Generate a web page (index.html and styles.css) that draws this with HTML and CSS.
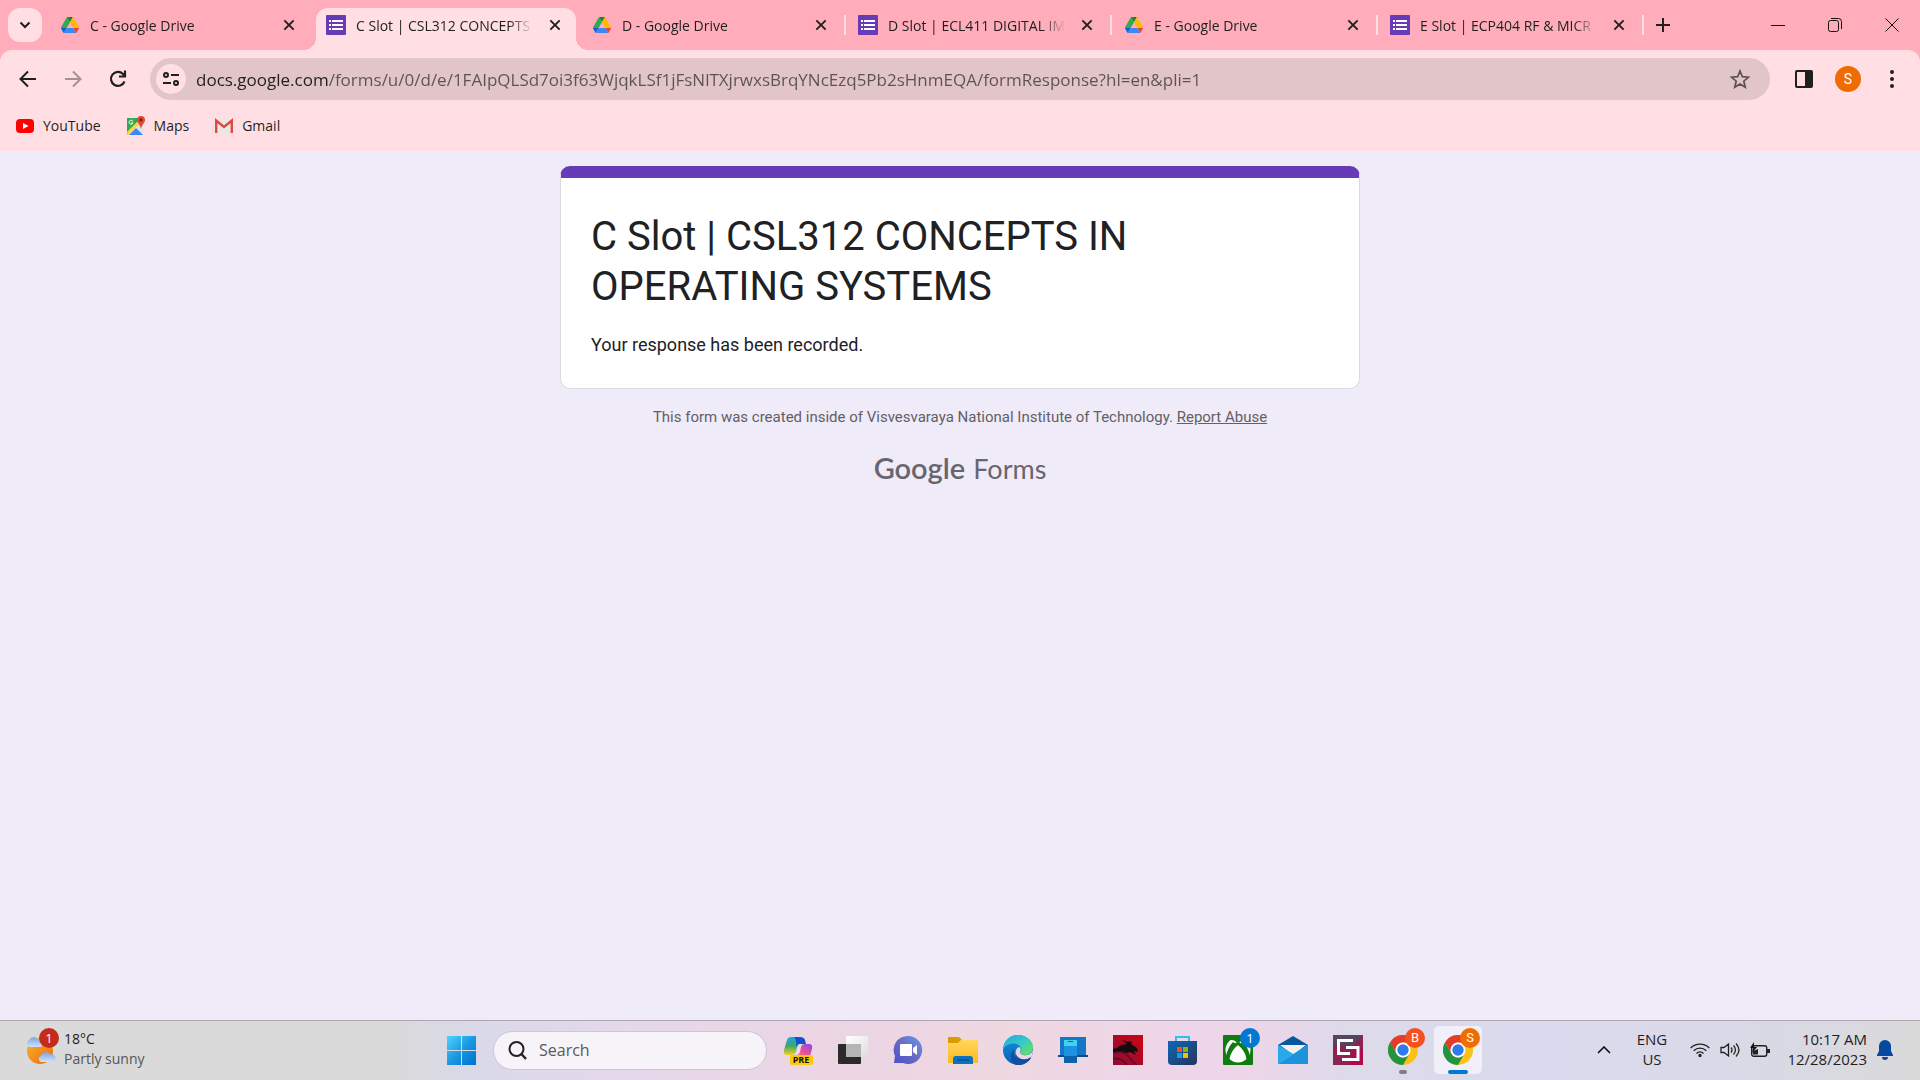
FILE: index.html
```html
<!DOCTYPE html>
<html lang="en">
<head>
<meta charset="utf-8">
<meta name="viewport" content="width=device-width, initial-scale=1">
<title>C Slot | CSL312 CONCEPTS IN OPERATING SYSTEMS</title>
<link rel="stylesheet" href="styles.css">
</head>
<body>
<svg class="defs" aria-hidden="true">
  <symbol id="drive" viewBox="0 0 87 78">
    <path fill="#0066da" d="M6.600 66.850l3.850 6.650c.8 1.400 1.950 2.500 3.300 3.300L27.500 53H0c0 1.550.4 3.100 1.200 4.500z"/>
    <path fill="#34a853" d="M43.650 25L29.900 1.200c-1.350.8-2.500 1.900-3.300 3.300L1.200 48.500A9 9 0 0 0 0 53h27.500z"/>
    <path fill="#ea4335" d="M73.550 76.800c1.350-.8 2.500-1.900 3.300-3.300l1.600-2.750L86.100 57.500c.8-1.400 1.200-2.950 1.200-4.500H59.800l5.850 11.500z"/>
    <path fill="#188038" d="M43.650 25L57.400 1.200C56.050.4 54.500 0 52.900 0H34.400c-1.600 0-3.150.45-4.500 1.200z"/>
    <path fill="#4285f4" d="M59.800 53H27.500L13.750 76.800c1.350.8 2.900 1.200 4.500 1.200h50.800c1.600 0 3.150-.45 4.500-1.200z"/>
    <path fill="#ffba00" d="M73.400 26.500L60.700 4.500c-.8-1.400-1.950-2.500-3.300-3.300L43.650 25 59.800 53h27.450c0-1.550-.4-3.100-1.200-4.500z"/>
  </symbol>
  <symbol id="forms" viewBox="0 0 20 20">
    <rect width="20" height="20" rx="1" fill="#673ab7"/>
    <path fill="#fff" d="M3 5h2v2H3zM6 5h11v2H6zM3 9h2v2H3zM6 9h11v2H6zM3 13h2v2H3zM6 13h11v2H6z"/>
  </symbol>
  <symbol id="close" viewBox="0 0 12 12">
    <path d="M2 2l8 8M10 2l-8 8" stroke="#1f1f1f" stroke-width="1.600" fill="none"/>
  </symbol>
  <symbol id="chrome" viewBox="0 0 30 30">
    <circle cx="15" cy="15" r="15" fill="#fbc116"/>
    <path fill="#e33b2e" d="M2 7.500A15 15 0 0 1 28 7.500H15A7.500 7.500 0 0 0 8.500 18.700z"/>
    <path fill="#229342" d="M2 7.500L8.500 18.800A7.500 7.500 0 0 0 21.500 18.700L15 30A15 15 0 0 1 2 7.500z"/>
    <circle cx="15" cy="15" r="7.500" fill="#fff"/>
    <circle cx="15" cy="15" r="5.700" fill="#2f79ea"/>
  </symbol>
</svg>

<header class="browser">
  <div class="tabstrip">
    <button class="tab-search" aria-label="Search tabs"><svg width="12" height="12" viewBox="0 0 12 12"><path d="M1.500 3.500L6 8l4.500-4.500" fill="none" stroke="#1f1f1f" stroke-width="2"/></svg></button>
    <nav class="tabs" aria-label="Open tabs">
      <div class="tab"><svg class="favicon drive"><use href="#drive"/></svg><span class="tab-title">C - Google Drive</span><button class="tab-close" aria-label="Close tab"><svg><use href="#close"/></svg></button></div>
      <div class="tab active"><svg class="favicon"><use href="#forms"/></svg><span class="tab-title">C Slot | CSL312 CONCEPTS</span><button class="tab-close" aria-label="Close tab"><svg><use href="#close"/></svg></button></div>
      <div class="tab divided"><svg class="favicon drive"><use href="#drive"/></svg><span class="tab-title">D - Google Drive</span><button class="tab-close" aria-label="Close tab"><svg><use href="#close"/></svg></button></div>
      <div class="tab divided"><svg class="favicon"><use href="#forms"/></svg><span class="tab-title">D Slot | ECL411 DIGITAL IM</span><button class="tab-close" aria-label="Close tab"><svg><use href="#close"/></svg></button></div>
      <div class="tab divided"><svg class="favicon drive"><use href="#drive"/></svg><span class="tab-title">E - Google Drive</span><button class="tab-close" aria-label="Close tab"><svg><use href="#close"/></svg></button></div>
      <div class="tab divided"><svg class="favicon"><use href="#forms"/></svg><span class="tab-title">E Slot | ECP404 RF &amp; MICR</span><button class="tab-close" aria-label="Close tab"><svg><use href="#close"/></svg></button></div>
      <button class="new-tab" aria-label="New tab"><svg width="14" height="14" viewBox="0 0 14 14"><path d="M7 0v14M0 7h14" stroke="#1f1f1f" stroke-width="2"/></svg></button>
    </nav>
    <div class="window-controls">
      <button aria-label="Minimize"><svg width="14" height="14" viewBox="0 0 14 14"><path d="M0 7.500h14" stroke="#111"/></svg></button>
      <button aria-label="Restore"><svg width="14" height="14" viewBox="0 0 14 14" fill="none" stroke="#111"><rect x=".5" y="2.500" width="10" height="11" rx="2"/><path d="M3 .5h7.500a3 3 0 0 1 3 3V11"/></svg></button>
      <button aria-label="Close window"><svg width="14" height="14" viewBox="0 0 14 14"><path d="M.5.5l13 13M13.500.5l-13 13" stroke="#111"/></svg></button>
    </div>
  </div>

  <div class="toolbar">
    <div class="nav-buttons">
      <button aria-label="Back"><svg width="20" height="20" viewBox="0 0 20 20"><path d="M18 10H3M10 2.500L2.500 10l7.500 7.500" fill="none" stroke="#1f1f1f" stroke-width="2"/></svg></button>
      <button aria-label="Forward" disabled><svg width="20" height="20" viewBox="0 0 20 20"><path d="M2 10h15M10 2.500l7.500 7.500-7.500 7.500" fill="none" stroke="#a48f92" stroke-width="2"/></svg></button>
      <button aria-label="Reload"><svg width="20" height="20" viewBox="0 0 20 20"><path d="M16.500 12.500A7 7 0 1 1 15 5l2 2M17 1.500V7.500h-6" fill="none" stroke="#1f1f1f" stroke-width="2.200"/></svg></button>
    </div>
    <div class="omnibox">
      <button class="site-info" aria-label="View site information"><svg width="18" height="16" viewBox="0 0 18 16" fill="none" stroke="#1f1f1f" stroke-width="2"><circle cx="4" cy="4" r="2"/><path d="M9 4h8M1 12h8"/><circle cx="14" cy="12" r="2"/></svg></button>
      <input class="url" type="text" aria-label="Address and search bar" spellcheck="false" value="docs.google.com/forms/u/0/d/e/1FAIpQLSd7oi3f63WjqkLSf1jFsNlTXjrwxsBrqYNcEzq5Pb2sHnmEQA/formResponse?hl=en&amp;pli=1">
      <button class="star" aria-label="Bookmark this tab"><svg width="20" height="20" viewBox="0 0 20 20"><path d="M10 2l2.300 5.700 6.200.5-4.700 4 1.500 6L10 15l-5.300 3.200 1.500-6-4.700-4 6.200-.5z" fill="none" stroke="#5c5254" stroke-width="1.700"/></svg></button>
    </div>
    <div class="toolbar-actions">
      <button aria-label="Side panel"><svg width="18" height="18" viewBox="0 0 18 18"><rect x="1" y="1" width="16" height="16" rx="1" fill="none" stroke="#1f1f1f" stroke-width="2"/><path d="M10 1h7v16h-7z" fill="#1f1f1f"/></svg></button>
      <button class="profile" aria-label="Profile S">S</button>
      <button aria-label="Menu"><svg width="4" height="18" viewBox="0 0 4 18" fill="#1f1f1f"><circle cx="2" cy="2" r="2"/><circle cx="2" cy="9" r="2"/><circle cx="2" cy="16" r="2"/></svg></button>
    </div>
  </div>

  <nav class="bookmarks" aria-label="Bookmarks">
    <a href="#youtube"><svg width="20" height="20" viewBox="0 0 20 20"><rect x="1" y="3" width="18" height="14" rx="4" fill="#f00"/><path d="M8 7l5.500 3L8 13z" fill="#fff"/></svg>YouTube</a>
    <a href="#maps"><svg width="20" height="20" viewBox="0 0 20 20"><path d="M1 2h16v17H1z" fill="#34a853"/><path d="M1 19L17 3v16z" fill="#dfe3e8"/><path d="M1 18L15 4" stroke="#fdd835" stroke-width="3"/><path d="M3 19l7-7 7 7z" fill="#4285f4"/><path d="M7 5.500A2 2 0 1 0 7 7H5" fill="none" stroke="#fff"/><path d="M15 0a4 4 0 0 0-4 4c0 3 3 4 4 9 1-5 4-6 4-9a4 4 0 0 0-4-4z" fill="#e0483a"/><circle cx="15" cy="4" r="1.400" fill="#811411"/></svg>Maps</a>
    <a href="#gmail"><svg width="20" height="20" viewBox="0 0 20 20"><path d="M1 3h18v14H1z" fill="#e9e7e7"/><path d="M2.200 17V4.500L10 11l7.800-6.500V17" fill="none" stroke="#dc4b3e" stroke-width="2.400"/></svg>Gmail</a>
  </nav>
</header>

<main class="page">
  <section class="card">
    <h1>C Slot | CSL312 CONCEPTS IN OPERATING SYSTEMS</h1>
    <p>Your response has been recorded.</p>
  </section>
  <p class="disclaimer">This form was created inside of Visvesvaraya National Institute of Technology. <a href="#report">Report Abuse</a></p>
  <a class="brand" href="#forms-home"><span class="brand-google">Google</span><span class="brand-forms">Forms</span></a>
</main>

<footer class="taskbar">
  <button class="weather">
    <span class="weather-icon">
      <svg width="34" height="34" viewBox="0 0 34 34"><defs><linearGradient id="sun" x1="0" y1="0" x2="1" y2="1"><stop stop-color="#f8b52b"/><stop offset="1" stop-color="#ee6a10"/></linearGradient><linearGradient id="cloud" x1="0" y1="0" x2="0" y2="1"><stop stop-color="#7fa3e4"/><stop offset="1" stop-color="#cfe1fa"/></linearGradient></defs><circle cx="15" cy="18" r="13" fill="url(#sun)"/><path d="M4 14a4 4 0 0 1 0-7 5.500 5.500 0 0 1 9-1 4.500 4.500 0 0 1 3 8z" fill="url(#cloud)"/><path d="M16 29a3.500 3.500 0 0 1 0-6.500 5 5 0 0 1 9-1 4 4 0 0 1 3 7.500z" fill="url(#cloud)"/></svg>
      <span class="badge red">1</span>
    </span>
    <span class="weather-text"><span>18°C</span><span class="muted">Partly sunny</span></span>
  </button>

  <div class="dock">
    <button class="app" aria-label="Start"><svg width="30" height="30" viewBox="0 0 30 30"><defs><linearGradient id="win" x1="0" y1="0" x2="1" y2="1"><stop stop-color="#4fd3ff"/><stop offset=".5" stop-color="#1b98e0"/><stop offset="1" stop-color="#0070d2"/></linearGradient></defs><path fill="url(#win)" d="M0 1h14v14H0zM15 1h14v14H15zM0 16h14v14H0zM15 16h14v14H15z"/></svg></button>
    <label class="search"><svg width="20" height="20" viewBox="0 0 20 20"><circle cx="8.500" cy="9" r="7" fill="none" stroke="#222" stroke-width="2"/><path d="M13 13.500L18 19" stroke="#222" stroke-width="2.400"/></svg><input type="search" placeholder="Search" aria-label="Search"></label>
    <button class="app" aria-label="Copilot"><svg width="30" height="30" viewBox="0 0 30 30"><defs><linearGradient id="cpa" x1="0" y1="0" x2="0" y2="1"><stop stop-color="#1ba5ea"/><stop offset=".5" stop-color="#42a567"/><stop offset="1" stop-color="#f3d51b"/></linearGradient><linearGradient id="cpb" x1="1" y1="0" x2="0" y2="1"><stop stop-color="#8a48ec"/><stop offset=".6" stop-color="#ee5093"/><stop offset="1" stop-color="#f98c45"/></linearGradient></defs><path d="M8 2h10l-5 15q-1 3-4 3H4q-4 0-3-5L4 5q1-3 4-3z" fill="url(#cpa)"/><path d="M11 2h6q4 0 5 3l1 4h-6q-3 0-4 3 1-7-2-10z" fill="#164fd0"/><path d="M19 9h7q4 0 3 5l-2 7H11q3 0 4-4l1-5q1-3 3-3z" fill="url(#cpb)"/><path d="M18 9q-3 0-4 4l-1 5q-1 2-3 2h3q3 0 4-3l1-5q1-3 3-3z" fill="#e9dcee"/><rect x="7" y="20" width="23" height="10" rx="2" fill="#ffc80a"/><text x="18" y="28" class="pre-tag">PRE</text></svg></button>
    <button class="app" aria-label="Task view"><svg width="30" height="30" viewBox="0 0 30 30"><defs><linearGradient id="tvw" x1="0" y1="0" x2="1" y2="1"><stop stop-color="#fff"/><stop offset="1" stop-color="#dedede"/></linearGradient></defs><rect y="9" width="23" height="20" rx="1" fill="#2b2b2b"/><rect x="8" y="1" width="22" height="21" rx="1" fill="url(#tvw)"/><rect x="8" y="9" width="15" height="13" fill="#b5b5b5"/></svg></button>
    <button class="app" aria-label="Chat"><svg width="30" height="30" viewBox="0 0 30 30"><defs><linearGradient id="chat" x1="1" y1="0" x2="0" y2="1"><stop stop-color="#679de8"/><stop offset=".5" stop-color="#6a69c4"/><stop offset="1" stop-color="#4c4fcb"/></linearGradient></defs><path d="M15 1a14 14 0 1 1-5 27H1l1-7A14 14 0 0 1 15 1z" fill="url(#chat)"/><rect x="7" y="9" width="12" height="12" rx="1" fill="#fff"/><path d="M20 13l4-3v10l-4-3z" fill="#fff"/></svg></button>
    <button class="app" aria-label="File Explorer"><svg width="30" height="30" viewBox="0 0 30 30"><defs><linearGradient id="fold" x1="0" y1="0" x2="0" y2="1"><stop stop-color="#ffd75e"/><stop offset="1" stop-color="#fcb91f"/></linearGradient></defs><path d="M0 3q0-1 1-1h10l3 3h15q1 0 1 1v5H0z" fill="#dc9a05"/><path d="M0 8h10l3-3h16q1 0 1 1v22H0z" fill="url(#fold)"/><path d="M5 29v-5q0-3 3-3h14q3 0 3 3v5z" fill="#0d70c0"/><path d="M9 25h12" stroke="#07437c"/></svg></button>
    <button class="app" aria-label="Edge"><svg width="30" height="30" viewBox="0 0 30 30"><defs><linearGradient id="edt" x1="0" y1="0" x2="1" y2="1"><stop stop-color="#22a6df"/><stop offset=".5" stop-color="#36c8c8"/><stop offset="1" stop-color="#6ee74b"/></linearGradient><linearGradient id="edb" x1="0" y1="0" x2="0" y2="1"><stop stop-color="#1592dc"/><stop offset="1" stop-color="#0a5fb8"/></linearGradient></defs><circle cx="15" cy="15" r="15" fill="url(#edb)"/><path d="M0 14C1 5 7 0 15 0c9 0 15 6 15 12 0 5-4 8-8 8-3 0-5-1-5-2 0-1 2-2 1-5C16 7 5 7 0 14z" fill="url(#edt)"/><path d="M11 15c-1 8 6 13 15 9l2-1c-4 6-10 8-15 7C7 28 6 18 11 15z" fill="#124f9e"/><path d="M30 15c0 3-1 6-2 8-3 2-12 3-15-3-1-3 0-7 3-8 2 1 2 3 1 5-1 3 10 6 13-2z" fill="#ead6e4"/><path d="M13 19c2 6 10 7 15 3 0 2-3 5-6 5-6 0-9-4-9-8z" fill="#124f9e"/></svg></button>
    <button class="app" aria-label="Phone Link"><svg width="30" height="30" viewBox="0 0 30 30"><path d="M2 2h26v19H2z" fill="#1476c4"/><path d="M0 20h30v2H0z" fill="#0b4c8c"/><rect x="6" y="5" width="13" height="23" rx="1" fill="#1b94df"/><path d="M6 5h13v6H6z" fill="#45cfee"/><path d="M6 21h13v7H6z" fill="#0c63ac"/><path d="M10 6.500h5" stroke="#115b9b"/></svg></button>
    <button class="app" aria-label="Dragon Center"><svg width="30" height="30" viewBox="0 0 30 30"><defs><linearGradient id="drg" x1="0" y1="1" x2="1" y2="0"><stop stop-color="#8f0c33"/><stop offset="1" stop-color="#c90713"/></linearGradient></defs><path d="M0 0h30v30H0z" fill="url(#drg)"/><path d="M0 14q5-1 8-4l6-1-5-4q6 2 10 2l-1 2 6 4 1 4-4-1 2 4-6-3-3 1q-5-2-14-1z" fill="#16090f"/><path d="M0 18q10-3 15 3t9 9M0 24q8-2 14 6" fill="none" stroke="#5a0a30" stroke-width="1.500"/></svg></button>
    <button class="app" aria-label="Microsoft Store"><svg width="30" height="30" viewBox="0 0 30 30"><defs><linearGradient id="sto" x1="0" y1="0" x2="1" y2="1"><stop stop-color="#0d68b8"/><stop offset="1" stop-color="#26345a"/></linearGradient></defs><path d="M8 7V2h13v5" fill="none" stroke="#30bdf2" stroke-width="2"/><path d="M0 6h29v20q0 4-4 4H4q-4 0-4-4z" fill="url(#sto)"/><path d="M9 12h5v5H9z" fill="#f25022"/><path d="M15 12h5v5h-5z" fill="#7fba00"/><path d="M9 18h5v5H9z" fill="#00a4ef"/><path d="M15 18h5v5h-5z" fill="#ffb900"/></svg></button>
    <button class="app" aria-label="Xbox"><svg width="30" height="30" viewBox="0 0 30 30"><rect width="30" height="30" rx="1" fill="#107c10"/><circle cx="15" cy="15" r="12.500" fill="#fff"/><path d="M6 5q4-1 9 3 5-4 9-3l-3-3H9zM13 9q-7 7-8 15l-2-3Q5 12 10 7zM17 9q7 7 8 15l2-3q-2-9-7-14z" fill="#107c10"/><path d="M15 8Q6 15 5 24M15 8q9 7 10 16" fill="none" stroke="#107c10" stroke-width="3"/></svg><span class="badge blue">1</span></button>
    <button class="app" aria-label="Mail"><svg width="30" height="30" viewBox="0 0 30 30"><path d="M0 10l15-9 15 9v8H0z" fill="#0b559f"/><path d="M2 10h26L15 20z" fill="#f3f0ee"/><path d="M0 10l15 9 15-9v19H0z" fill="#36c1f1"/><path d="M0 29L30 10v19z" fill="#1c93dc"/><path d="M0 10l15 9L0 29z" fill="#28a9e8"/></svg></button>
    <button class="app" aria-label="SteelSeries"><svg width="30" height="30" viewBox="0 0 30 30"><path d="M0 0h30v30H0z" fill="#8d2352"/><path d="M0 0h30L20 10H0z" fill="#55455e"/><path d="M21 14h9v16H16z" fill="#ae0b48"/><path d="M20 5.500H5.500v13H17M13 12.500h12v12H9" fill="none" stroke="#fff" stroke-width="3"/></svg></button>
    <button class="app running" aria-label="Chrome profile B"><svg width="30" height="30"><use href="#chrome"/></svg><span class="badge coral">B</span></button>
    <button class="app current" aria-label="Chrome profile S"><svg width="30" height="30"><use href="#chrome"/></svg><span class="badge orange">S</span></button>
  </div>

  <div class="tray">
    <button class="overflow" aria-label="Show hidden icons"><svg width="14" height="8" viewBox="0 0 14 8"><path d="M1 7l6-6 6 6" fill="none" stroke="#111" stroke-width="1.600"/></svg></button>
    <button class="language"><span>ENG</span><span>US</span></button>
    <button class="status" aria-label="Network, volume and battery">
      <svg width="20" height="16" viewBox="0 0 20 16" fill="none" stroke="#222" stroke-width="1.400"><path d="M.7 6a13 13 0 0 1 18.600 0M3.700 8.700a9 9 0 0 1 12.600 0M6.500 11.400a5 5 0 0 1 7 0"/><circle cx="10" cy="13.500" r="1" fill="#222"/></svg>
      <svg width="20" height="16" viewBox="0 0 20 16" fill="none" stroke="#222" stroke-width="1.300"><path d="M1 5.500h3L8.500 2v12L4 10.500H1zM11 5.500q2 2.500 0 5M13.500 3.500q4 4.500 0 9M16 1.500q6 6.500 0 13"/></svg>
      <svg width="20" height="16" viewBox="0 0 20 16"><rect x="1.700" y="3.700" width="15" height="10.600" rx="2" fill="none" stroke="#222" stroke-width="1.400"/><path d="M17 7h3v4h-3zM3 12.500V9l5-2v5.500z" fill="#222"/><path d="M4 0L0 6h3l-1 5 5-6H4z" fill="#111"/></svg>
    </button>
    <button class="clock"><time>10:17 AM</time><time datetime="2023-12-28">12/28/2023</time></button>
    <button class="bell" aria-label="Notifications"><svg width="16" height="20" viewBox="0 0 16 20" fill="#054a9f"><path d="M8 0a6 6 0 0 0-6 6v5l-2 4v1h16v-1l-2-4V6a6 6 0 0 0-6-6zM5 17h6a3 3 0 0 1-6 0z"/></svg></button>
  </div>
</footer>
</body>
</html>
```
FILE: styles.css
```css
* { box-sizing: border-box; }

body {
  margin: 0;
  min-height: 100vh;
  display: flex;
  flex-direction: column;
  background: #f0ebf8;
  color: #1f1f1f;
  font: 14px/20px "Open Sans", "Noto Sans", sans-serif;
}

button {
  display: flex;
  align-items: center;
  justify-content: center;
  padding: 0;
  border: 0;
  background: none;
  color: inherit;
  font: inherit;
}

button svg { flex: none; }
input { border: 0; padding: 0; background: none; font: inherit; outline: 0; }
.defs { display: none; }

/* Tab strip */
.browser { background: #ffadba; }

.tabstrip {
  display: flex;
  align-items: flex-start;
  height: 50px;
  padding: 8px 0 0 8px;
}

.tab-search {
  flex: none;
  width: 34px;
  height: 34px;
  margin-right: 8px;
  border-radius: 12px;
  background: #ffdfe4;
}

.tabs { flex: 1; display: flex; gap: 6px; min-width: 0; }

.tab {
  position: relative;
  flex: 0 1 260px;
  min-width: 0;
  height: 42px;
  display: flex;
  align-items: center;
  gap: 10px;
  padding: 0 9px 8px 10px;
}

.tab.active { background: #ffdfe4; border-radius: 12px 12px 0 0; }

.tab.active::before,
.tab.active::after {
  content: "";
  position: absolute;
  bottom: 0;
  width: 12px;
  height: 12px;
}

.tab.active::before { right: 100%; background: radial-gradient(circle at 0 0, #ffadba 12px, #ffdfe4 12px); }
.tab.active::after { left: 100%; background: radial-gradient(circle at 100% 0, #ffadba 12px, #ffdfe4 12px); }

.tab.divided::after {
  content: "";
  position: absolute;
  top: 7px;
  left: 100%;
  width: 2px;
  height: 20px;
  margin-left: 2px;
  background: #ffdfe4;
}

.favicon { flex: none; width: 20px; height: 20px; }
.favicon.drive { padding: 1px; }

.tab-title {
  flex: 1;
  min-width: 0;
  overflow: hidden;
  white-space: nowrap;
  line-height: 22px;
  padding-top: 2px;
  mask-image: linear-gradient(90deg, #000 calc(100% - 24px), transparent);
}

.tab-close { flex: none; width: 24px; height: 24px; }
.tab-close svg { width: 14px; height: 14px; }
.new-tab { flex: none; width: 34px; height: 34px; }

.window-controls { flex: none; display: flex; }
.window-controls button { width: 57px; height: 34px; }

/* Toolbar */
.toolbar {
  display: flex;
  align-items: center;
  gap: 14px;
  padding: 8px 13px 0 10px;
  background: #ffdfe4;
  border-radius: 12px 12px 0 0;
}

.nav-buttons { display: flex; gap: 9px; }
.nav-buttons button { width: 36px; height: 36px; }

.omnibox {
  flex: 1;
  display: flex;
  align-items: center;
  gap: 10px;
  height: 42px;
  padding: 0 16px 0 6px;
  border-radius: 21px;
  background: #e1c5c9;
}

.site-info { flex: none; width: 30px; height: 30px; border-radius: 50%; background: #ffdfe4; }

/* The host name is dark and the path after it is grey. */
.url {
  flex: 1;
  min-width: 0;
  height: 30px;
  font-size: 17px;
  color: transparent;
  caret-color: #1f1f1f;
  background: linear-gradient(90deg, #1f1f1f 132px, #5c5254 132px) text;
}

.star { flex: none; width: 28px; height: 28px; }

.toolbar-actions { display: flex; align-items: center; gap: 16px; margin-left: 5px; }
.toolbar-actions button { width: 30px; height: 30px; }
.toolbar-actions .profile {
  width: 26px;
  height: 26px;
  border-radius: 50%;
  background: #ef6c00;
  color: #fff;
  font: 14px/26px Roboto, sans-serif;
}

.bookmarks {
  display: flex;
  gap: 25px;
  height: 51px;
  padding: 16px 15px;
  background: #ffdfe4;
}

.bookmarks a { display: flex; align-items: center; gap: 8px; height: 20px; color: inherit; text-decoration: none; }

/* Form page */
.page {
  flex: 1;
  display: flex;
  flex-direction: column;
  align-items: center;
  padding: 15px 20px;
  font-family: Roboto, sans-serif;
}

.card {
  width: 100%;
  max-width: 800px;
  padding: 34px 30px 30px;
  border: 1px solid #dadce0;
  border-top: 12px solid #673ab7;
  border-radius: 10px;
  background: #fff;
  color: #202124;
}

.card h1 { margin: 0 0 20px; font-size: 40px; line-height: 50px; font-weight: 400; }
.card p { margin: 0; font-size: 18px; line-height: 26px; }

.disclaimer { margin: 18px 0 21px; font-size: 15px; line-height: 20px; color: #625f66; }
.disclaimer a { color: inherit; }

.brand {
  display: flex;
  align-items: baseline;
  gap: 8px;
  color: #69656f;
  line-height: 40px;
  text-decoration: none;
  font-family: Lato, sans-serif;
}

.brand-google { font-size: 29px; font-weight: 600; }
.brand-forms { font-size: 27px; }

/* Taskbar */
.taskbar {
  display: grid;
  grid-template-columns: 1fr auto 1fr;
  align-items: center;
  height: 60px;
  padding-bottom: 1px;
  border-top: 1px solid #aca6b2;
  background: linear-gradient(90deg, #dadada 0 20%, #d9d9e9 25%, #e5d8ea 33%, #ecd5e3 44%, #eed8e0 52%, #eed6ea 62%, #ecd6e8 65%, #dedaea 70%, #d9daee 80%, #d9d9e6 92%, #dadada 100%);
  font-size: 15px;
}

.weather { justify-self: start; gap: 5px; padding-left: 25px; text-align: left; font-size: 14px; }
.weather-icon { position: relative; display: flex; }
.weather-text, .language, .clock { display: flex; flex-direction: column; line-height: 20px; padding-bottom: 2px; }
.muted { color: #555; }

.badge {
  position: absolute;
  top: 2px;
  right: 2px;
  width: 20px;
  height: 20px;
  border-radius: 50%;
  color: #fff;
  font-size: 13px;
  line-height: 20px;
  text-align: center;
}

.weather .badge { top: -5px; right: 0; }
.red { background: #c42b1c; }
.blue { background: #0078d4; }
.coral { background: #f4511e; font-family: Roboto, sans-serif; }
.orange { background: #ef6c00; font-family: Roboto, sans-serif; }

.dock { display: flex; align-items: center; gap: 7px; }
.app { position: relative; flex: none; width: 48px; height: 48px; border-radius: 5px; }
.current { background: #f1eff8; }

.running::after,
.current::after {
  content: "";
  position: absolute;
  bottom: 0;
  width: 8px;
  height: 4px;
  border-radius: 2px;
  background: #817d86;
}

.current::after { width: 20px; background: #0078d4; }

.pre-tag { font: 700 9px "Open Sans", sans-serif; text-anchor: middle; fill: #111; }

.search {
  display: flex;
  align-items: center;
  gap: 11px;
  width: 274px;
  height: 39px;
  padding: 0 14px;
  border: 1px solid #d0c4da;
  border-radius: 20px;
  background: #f6f3f9;
}

.search svg { flex: none; }
.search input { flex: 1; min-width: 0; font-size: 16px; }
.search input::placeholder { color: #5b595d; opacity: 1; }

.tray { justify-self: end; display: flex; align-items: center; padding-right: 27px; }
.overflow { width: 30px; height: 40px; }
.language { width: 66px; }
.status { width: 90px; gap: 10px; margin-right: 4px; }
.clock { width: 88px; align-items: flex-end; }
.bell { width: 24px; height: 40px; justify-content: flex-end; margin-left: 2px; }
```
